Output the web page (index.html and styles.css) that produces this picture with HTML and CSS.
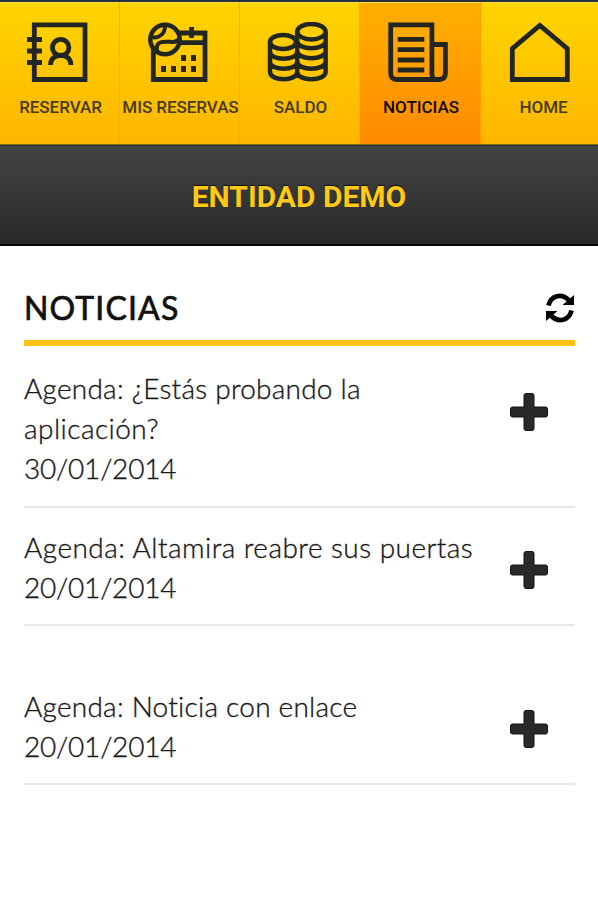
FILE: index.html
```html
<!DOCTYPE html>
<html lang="es">
<head>
<meta charset="utf-8">
<title>Noticias</title>
<link rel="stylesheet" href="styles.css">
</head>
<body>
<nav class="tabs">
  <a class="tab">
    <svg class="tab-icon" viewBox="0 0 62 62"><path d="M7.3 2.8H58v54.7H7.3zM0 17.5h15M0 29h15M0 40.5h15"/><circle cx="33.7" cy="25.5" r="8.2"/><path d="M23.500 43C23.500 30 43.900 30 43.900 43"/></svg>
    <span>RESERVAR</span>
  </a>
  <a class="tab">
    <svg class="tab-icon" viewBox="0 0 62 62"><path d="M6.3 11H58v46.5H6.3zM20 20.7h38M44.5 5v11"/><circle class="ball" cx="18" cy="17.5" r="14.7"/><path class="seam" d="M4 15C13 17 18 11 18 4M10 29C8 17 19 20 26 20Q30 20 33 16"/><path class="days" d="M34 36h5M44 36h5M14 47h5M24 47h5M34 47h5M44 47h5"/></svg>
    <span>MIS RESERVAS</span>
  </a>
  <a class="tab">
    <svg class="tab-icon" viewBox="0 0 62 62"><g class="coins"><ellipse cx="16" cy="20" rx="13" ry="7"/><ellipse cx="44.4" cy="9.7" rx="14.2" ry="7.7"/><path d="M3 20v30c0 9.500 27.200 9.500 27.200 0M3 30c0 9 27.200 9 27.200 0M3 40c0 9 27.200 9 27.200 0M30.200 10v40c0 9.500 28.400 9.500 28.400 0V10M30.200 19c0 9.500 28.400 9.500 28.400 0M30.200 29c0 9.500 28.400 9.500 28.400 0M30.200 39.500c0 9.500 28.400 9.500 28.400 0"/></g></svg>
    <span>SALDO</span>
  </a>
  <a class="tab active">
    <svg class="tab-icon" viewBox="0 0 62 62"><path d="M53.500 57.500H9.500Q3.700 57.500 3.700 51V2.800h41.200V52Q45 57.500 49.200 57.500M44.900 22.500h13.500V51Q58.400 57.500 52 57.500H49M10.700 17.300h26.600M10.700 27.700h26.600M10.700 38h26.600M10.700 48h26.600"/></svg>
    <span>NOTICIAS</span>
  </a>
  <a class="tab home">
    <svg class="tab-icon" viewBox="0 0 62 62"><path d="M4.300 57.500V26.700L31.800 3.400l27.500 23.300v30.800z"/></svg>
    <span>HOME</span>
  </a>
</nav>
<header class="entity">ENTIDAD DEMO</header>
<main class="news">
  <div class="heading">
    <h1>NOTICIAS</h1>
    <svg class="refresh" viewBox="0 0 30 30"><path class="arc" d="M3.500 12.500C6 2 17 0 24 7.500M26.500 17.500C24 28 13 30 6 22.500"/><path d="M29 2V12H17.500zM1 28V18h11.500z"/></svg>
  </div>
  <article class="item tall">
    <div class="text"><p>Agenda: ¿Estás probando la</p><p class="wide">aplicación?</p><p class="date">30/01/2014</p></div>
    <svg class="plus" viewBox="0 0 40 40"><path d="M17 1.500h6q2 0 2 2V15h11.500q2 0 2 2v6q0 2-2 2H25v11.500q0 2-2 2h-6q-2 0-2-2V25H3.500q-2 0-2-2v-6q0-2 2-2H15V3.500q0-2 2-2z"/></svg>
  </article>
  <article class="item">
    <div class="text"><p class="wide">Agenda: Altamira reabre sus puertas</p><p class="date">20/01/2014</p></div>
    <svg class="plus" viewBox="0 0 40 40"><path d="M17 1.500h6q2 0 2 2V15h11.500q2 0 2 2v6q0 2-2 2H25v11.500q0 2-2 2h-6q-2 0-2-2V25H3.500q-2 0-2-2v-6q0-2 2-2H15V3.500q0-2 2-2z"/></svg>
  </article>
  <article class="item spaced">
    <div class="text"><p>Agenda: Noticia con enlace</p><p class="date">20/01/2014</p></div>
    <svg class="plus" viewBox="0 0 40 40"><path d="M17 1.500h6q2 0 2 2V15h11.500q2 0 2 2v6q0 2-2 2H25v11.500q0 2-2 2h-6q-2 0-2-2V25H3.500q-2 0-2-2v-6q0-2 2-2H15V3.500q0-2 2-2z"/></svg>
  </article>
</main>
</body>
</html>
```
FILE: styles.css
```css
* { box-sizing: border-box; }
body { margin: 0; background: #fff; color: #111; font-family: Lato, sans-serif; overflow: hidden; }
.tabs { display: grid; grid-template-columns: 120px 120px 120px 121px 117px; height: 145px; border-top: 2px solid #28313a; border-bottom: 1px solid #80691c; }
.tab { min-width: 0; padding-top: 20px; border-right: 1px solid #edb606; border-top: 1px solid #ffdc58; background: linear-gradient(#ffd400, #ffb600); display: flex; flex-direction: column; align-items: center; color: #443b20; font: 500 17px/20px Roboto, sans-serif; letter-spacing: -.05px; white-space: nowrap; }
.tab.active { background: linear-gradient(#ffb000, #ff8a00); color: #120a04; border-right-color: #ffa000; }
.tab.home { border-right: 0; }
.tab span { padding-left: 2px; }
.tab.home span { padding-left: 8px; }
.tab-icon { width: 62px; height: 62px; flex: none; margin: -1px 4px 13px 0; fill: none; stroke: #222622; stroke-width: 4.800; }
.home .tab-icon { margin-right: 2px; }
.ball { fill: #ffc900; stroke-width: 4.500; }
.seam { stroke-width: 4; }
.days { stroke-width: 6; }
.coins { stroke-width: 4.500; }
.entity { height: 101px; display: flex; align-items: center; justify-content: center; padding-top: 3px; background: linear-gradient(#424444, #292929); border-top: 1px solid #2c3438; border-bottom: 2px solid #090909; color: #ffc915; font: 700 30px/34px Roboto, sans-serif; text-shadow: 0 -1px 1px #111; }
.news { padding: 0 23px 0 24px; }
.heading { height: 100px; display: flex; align-items: flex-start; justify-content: space-between; border-bottom: 6px solid #ffc20e; }
h1 { margin: 42px 0 0; font-size: 32px; line-height: 40px; font-weight: 400; letter-spacing: 1.15px; -webkit-text-stroke: .7px #111; }
.refresh { width: 30px; height: 30px; margin-top: 47px; }
.arc { fill: none; stroke: #000; stroke-width: 4.800; }
.item { display: flex; justify-content: space-between; height: 118px; border-bottom: 2px solid #e7e7e7; padding-top: 19px; }
.item.tall { height: 162px; padding-top: 22px; }
.item.spaced { height: 159px; padding-top: 60px; }
.text { font-size: 28px; line-height: 40px; font-weight: 300; font-variant-ligatures: none; letter-spacing: .24px; color: #181818; -webkit-text-stroke: .35px #181818; white-space: nowrap; }
p { margin: 0; }
.wide { letter-spacing: .46px; }
.date { letter-spacing: -.2px; }
.plus { width: 40px; height: 40px; flex: none; margin: 23px 26px 0 0; fill: #292a27; stroke: #101210; stroke-width: 1; }
.tall .plus { margin-top: 24px; }
```
